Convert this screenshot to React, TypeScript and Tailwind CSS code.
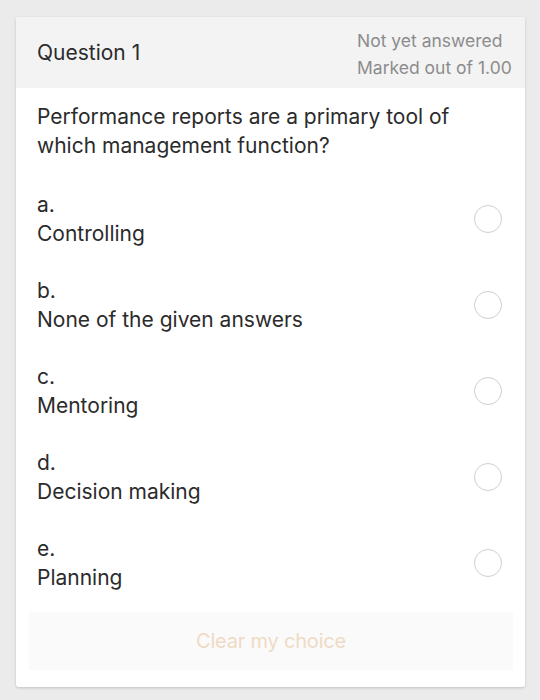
import React from "react";

const options = [
  { letter: "a.", text: "Controlling" },
  { letter: "b.", text: "None of the given answers" },
  { letter: "c.", text: "Mentoring" },
  { letter: "d.", text: "Decision making" },
  { letter: "e.", text: "Planning" },
];

export default function App() {
  return (
    <div
      className="w-[540px] h-[700px] bg-[#ebebeb] pt-[17px] pl-[16px] overflow-hidden"
      style={{ fontFamily: "Inter, 'Noto Sans', sans-serif" }}
    >
      <div className="w-[509px] h-[670px] bg-white rounded-[3px] shadow-[0_1px_3px_rgba(0,0,0,0.18)] flex flex-col">
        <div className="h-[71px] bg-[#f3f3f3] rounded-t-[3px] flex items-center justify-between pl-[21px] pr-[8px]">
          <div className="text-[21px] text-[#2b2b2b]">Question 1</div>
          <div className="w-[160px] text-[17.5px] leading-[27px] text-[#8c8c8c] pt-[3px]">
            <div>Not yet answered</div>
            <div>Marked out of 1.00</div>
          </div>
        </div>
        <div className="px-[21px] pt-[14px] text-[#2b2b2b]">
          <div className="text-[21px] leading-[29px]">
            Performance reports are a primary tool of
            <br />
            which management function?
          </div>
          <div className="flex flex-col gap-[28px] mt-[30px]">
            {options.map((o) => (
              <div key={o.letter} className="flex items-center justify-between">
                <div className="text-[21px] leading-[29px]">
                  <div>{o.letter}</div>
                  <div>{o.text}</div>
                </div>
                <div className="w-[28px] h-[28px] rounded-full border-[1.5px] border-[#cfcfcf] mr-[2px]" />
              </div>
            ))}
          </div>
        </div>
        <div className="ml-[13px] mt-[20px] w-[484px] h-[58px] bg-[#fafafa] flex items-center justify-center text-[20px] text-[#efdbc4] tracking-[-0.2px]">
          Clear my choice
        </div>
      </div>
    </div>
  );
}
